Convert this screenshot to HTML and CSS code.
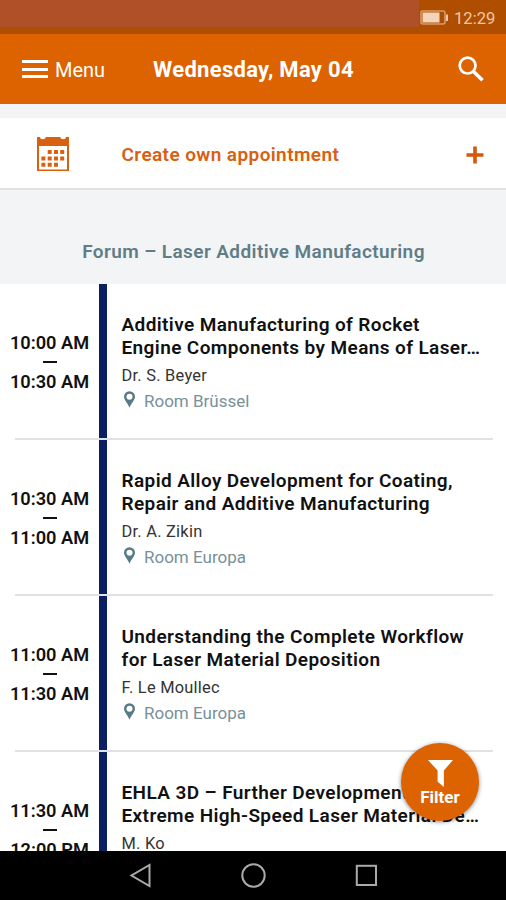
FILE: index.html
```
<!DOCTYPE html>
<html lang="en">
<head>
  <meta charset="UTF-8">
  <meta name="viewport" content="width=device-width, initial-scale=1.0">
  <title>Conference Schedule</title>
  <link rel="stylesheet" href="styles.css">
</head>
<body>
  <div class="app">
    <div class="status-bar">
      <div class="status-tint"></div>
      <div class="status-info">
        <svg class="battery" viewBox="0 0 28 16">
          <rect x="1" y="1" width="24" height="13" rx="2" fill="none" stroke="#d89a6c" stroke-width="1.6"/>
          <rect x="2.5" y="2.5" width="17" height="10" fill="#f3d3ba"/>
          <rect x="26" y="4.5" width="2" height="6.5" fill="#efc8a8"/>
        </svg>
        <span class="clock">12:29</span>
      </div>
    </div>

    <header class="header">
      <button class="menu-btn">
        <span class="menu-icon"><i></i><i></i><i></i></span>
        <span class="menu-label">Menu</span>
      </button>
      <h1>Wednesday, May 04</h1>
      <button class="search-btn" aria-label="Search">
        <svg viewBox="0 0 26 26" fill="none" stroke="#fff">
          <circle cx="9.6" cy="9.6" r="7.9" stroke-width="2.7"/>
          <path d="M15.3 15.3L24.5 24.2" stroke-width="3.6"/>
        </svg>
      </button>
    </header>

    <button class="create">
      <svg class="calendar" viewBox="0 0 32 34" fill="#d8600f">
        <path d="M0 0H3.2V1.2Q5.5 3.4 8.5 1.2V0H23.5V1.2Q26.5 3.4 28.8 1.2V0H32V34H0ZM2 9V32.4H30V9Z" fill-rule="evenodd"/>
        <path d="M10.7 13h4v4h-4zM17 13h4v4h-4zM23.2 13h4v4h-4zM4.4 19.4h4v4h-4zM10.7 19.4h4v4h-4zM17 19.4h4v4h-4zM23.2 19.4h4v4h-4zM4.4 25.8h4v4h-4zM10.7 25.8h4v4h-4zM17 25.8h4v4h-4z"/>
      </svg>
      <span class="create-label">Create own appointment</span>
      <svg class="plus" viewBox="0 0 18 18">
        <path d="M9 .5V17.5M.5 9H17.5" stroke="#d8560c" stroke-width="3.6"/>
      </svg>
    </button>

    <h2 class="section-title">Forum – Laser Additive Manufacturing</h2>

    <main class="schedule">
      <article class="session">
        <div class="time"><span>10:00 AM</span><i></i><span>10:30 AM</span></div>
        <div class="track"></div>
        <div class="details">
          <h3>Additive Manufacturing of Rocket<br>Engine Components by Means of Laser…</h3>
          <p class="speaker">Dr. S. Beyer</p>
          <p class="room"><svg viewBox="0 0 12 18"><path d="M6 0A6 6 0 0 0 0 6C0 9.5 3.6 12 6 18C8.4 12 12 9.5 12 6A6 6 0 0 0 6 0ZM6 2.6A3.3 3.3 0 0 1 6 9.2A3.3 3.3 0 0 1 6 2.6Z" fill-rule="evenodd"/></svg>Room Brüssel</p>
        </div>
      </article>

      <article class="session">
        <div class="time"><span>10:30 AM</span><i></i><span>11:00 AM</span></div>
        <div class="track"></div>
        <div class="details">
          <h3>Rapid Alloy Development for Coating,<br>Repair and Additive Manufacturing</h3>
          <p class="speaker">Dr. A. Zikin</p>
          <p class="room"><svg viewBox="0 0 12 18"><path d="M6 0A6 6 0 0 0 0 6C0 9.5 3.6 12 6 18C8.4 12 12 9.5 12 6A6 6 0 0 0 6 0ZM6 2.6A3.3 3.3 0 0 1 6 9.2A3.3 3.3 0 0 1 6 2.6Z" fill-rule="evenodd"/></svg>Room Europa</p>
        </div>
      </article>

      <article class="session">
        <div class="time"><span>11:00 AM</span><i></i><span>11:30 AM</span></div>
        <div class="track"></div>
        <div class="details">
          <h3>Understanding the Complete Workflow<br>for Laser Material Deposition</h3>
          <p class="speaker">F. Le Moullec</p>
          <p class="room"><svg viewBox="0 0 12 18"><path d="M6 0A6 6 0 0 0 0 6C0 9.5 3.6 12 6 18C8.4 12 12 9.5 12 6A6 6 0 0 0 6 0ZM6 2.6A3.3 3.3 0 0 1 6 9.2A3.3 3.3 0 0 1 6 2.6Z" fill-rule="evenodd"/></svg>Room Europa</p>
        </div>
      </article>

      <article class="session">
        <div class="time"><span>11:30 AM</span><i></i><span>12:00 PM</span></div>
        <div class="track"></div>
        <div class="details">
          <h3>EHLA 3D – Further Development<br>Extreme High-Speed Laser Material De…</h3>
          <p class="speaker">M. Ko</p>
        </div>
      </article>
    </main>

    <button class="filter-btn">
      <svg viewBox="0 0 26 28"><path d="M0 0H26L16.5 11V28L10 22.5V11Z" fill="#fff"/></svg>
      Filter
    </button>

    <nav class="nav-bar">
      <svg viewBox="0 0 25 25"><path d="M21.5 2V23L3.5 12.5Z"/></svg>
      <svg viewBox="0 0 25 25"><circle cx="12.5" cy="12.5" r="11.2"/></svg>
      <svg viewBox="0 0 25 25"><rect x="2.8" y="2.8" width="19.2" height="19.2"/></svg>
    </nav>
  </div>
</body>
</html>
```
FILE: styles.css
```
* {
  margin: 0;
  padding: 0;
  box-sizing: border-box;
}

body {
  font-family: Roboto, sans-serif;
  background: #f3f4f6;
  color: #111;
}

button {
  border: none;
  background: none;
  font-family: inherit;
  cursor: pointer;
}

svg {
  display: block;
  flex-shrink: 0;
}

.app {
  position: relative;
  width: 506px;
  height: 900px;
  display: flex;
  flex-direction: column;
  overflow: hidden;
}

.status-bar {
  display: flex;
  height: 34px;
  background: #b04e00;
  flex-shrink: 0;
}

.status-tint {
  width: 419px;
  height: 27px;
  background: #b05028;
}

.status-info {
  display: flex;
  align-items: center;
  height: 36px;
}

.battery {
  width: 28px;
  height: 16px;
  margin-left: 1px;
}

.clock {
  margin-left: 6px;
  font-size: 16.6px;
  color: #efc7a8;
}

.header {
  display: flex;
  align-items: center;
  height: 70px;
  padding: 0 22px;
  background: #dd6200;
  color: #fff;
  flex-shrink: 0;
}

.menu-btn {
  display: flex;
  align-items: center;
  gap: 7px;
  width: 131px;
  color: #fff;
  font-size: 20px;
}

.menu-label {
  padding-top: 2px;
}

.menu-icon {
  display: flex;
  flex-direction: column;
  gap: 4.5px;
  width: 26px;
}

.menu-icon i {
  height: 3px;
  background: #fff;
}

.header h1 {
  padding-top: 1px;
  font-size: 22px;
  font-weight: 700;
  letter-spacing: 0.3px;
  white-space: nowrap;
}

.search-btn {
  margin-left: auto;
}

.search-btn svg {
  width: 26px;
  height: 26px;
}

.create {
  display: flex;
  align-items: center;
  height: 72px;
  margin-top: 14px;
  padding: 2px 22px 0 37px;
  background: #fff;
  border-bottom: 2px solid #e0e1e3;
  flex-shrink: 0;
}

.calendar {
  width: 32px;
  height: 34px;
}

.create-label {
  margin-left: 52.5px;
  padding-top: 1px;
  font-size: 19px;
  font-weight: 600;
  letter-spacing: 0.4px;
  color: #d8600f;
}

.plus {
  width: 18px;
  height: 18px;
  margin-top: 2px;
  margin-left: auto;
}

.section-title {
  height: 94px;
  padding: 48px 0 0 1px;
  text-align: center;
  font-size: 19px;
  line-height: 28px;
  font-weight: 600;
  letter-spacing: 0.4px;
  color: #607d86;
  flex-shrink: 0;
}

.schedule {
  flex: 1;
  min-height: 0;
  overflow: hidden;
  background: #fff;
}

.session {
  display: flex;
  height: 156px;
  background: linear-gradient(#e0e2e4, #e0e2e4) 15px 100% / 478px 2px no-repeat;
}

.time {
  display: flex;
  flex-direction: column;
  align-items: center;
  width: 99px;
  padding-top: 48px;
  font-size: 18.2px;
  line-height: 22px;
  font-weight: 600;
}

.time i {
  width: 14px;
  height: 2px;
  margin: 7px 0 8px;
  background: #111;
}

.track {
  width: 8px;
  height: 154px;
  background: #0b1f63;
}

.details {
  padding: 29px 0 0 14.5px;
}

.details h3 {
  font-size: 19px;
  line-height: 23px;
  font-weight: 600;
  letter-spacing: 0.39px;
  white-space: nowrap;
}

.speaker {
  margin-top: 6px;
  font-size: 16.4px;
  line-height: 22px;
  letter-spacing: 0.25px;
  color: #333;
}

.room {
  display: flex;
  align-items: center;
  gap: 9px;
  margin-top: 3px;
  padding-left: 2.5px;
  font-size: 17px;
  line-height: 22px;
  color: #78909a;
}

.room svg {
  width: 11px;
  height: 17px;
  margin-top: -3px;
  fill: #587988;
}

.filter-btn {
  position: absolute;
  right: 27px;
  top: 743px;
  display: flex;
  flex-direction: column;
  align-items: center;
  width: 78px;
  height: 78px;
  padding-top: 17px;
  border-radius: 50%;
  background: #dd6200;
  box-shadow: 0 1px 4px rgba(0, 0, 0, 0.5);
  color: #fff;
  font-size: 17px;
  line-height: 20px;
  font-weight: 700;
}

.filter-btn svg {
  width: 25px;
  height: 27px;
}

.nav-bar {
  display: flex;
  justify-content: center;
  align-items: center;
  gap: 88px;
  height: 49px;
  background: #000;
  flex-shrink: 0;
}

.nav-bar svg {
  width: 25px;
  height: 25px;
  fill: none;
  stroke: #aaa;
  stroke-width: 2;
}
```
